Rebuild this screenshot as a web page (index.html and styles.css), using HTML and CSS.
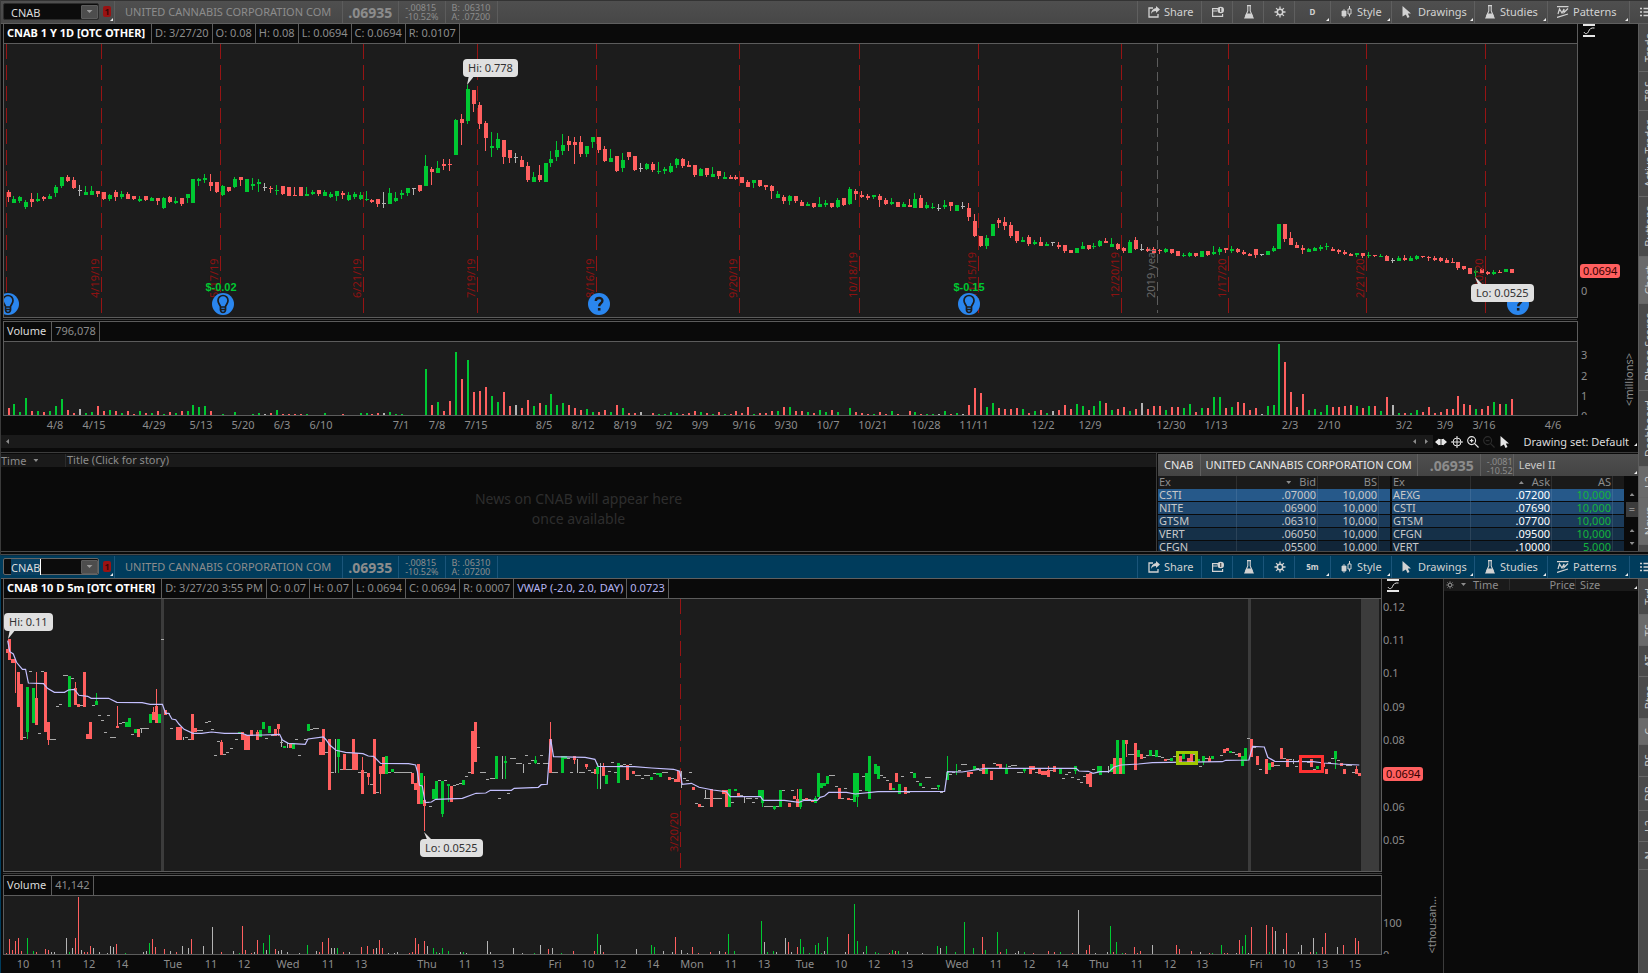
FILE: index.html
```html
<!DOCTYPE html>
<html lang="en">
<head>
<meta charset="utf-8">
<title>CNAB charts</title>
<link rel="stylesheet" href="styles.css">
</head>
<body>
<svg class="defs" aria-hidden="true">
  <symbol id="i-share" viewBox="0 0 12 12"><path d="M5 2H1v9h9V8" fill="none" stroke="currentColor" stroke-width="1.3"/><path d="M8 0l4 3.6L8 7V5C5.5 5 4 6 3 8c0-3.500 2-5.500 5-6z" fill="currentColor"/></symbol>
  <symbol id="i-alert" viewBox="0 0 12 12"><path d="M6 2.600H.6v7.800h10V8M.6 5H5" fill="none" stroke="currentColor" stroke-width="1.200"/><circle cx="8.700" cy="4" r="3.300" fill="currentColor"/><path d="M8.700 2v4" stroke="#4a4a4a" stroke-width="1.200"/></symbol>
  <symbol id="i-flask" viewBox="0 0 12 14"><path d="M4 .6h4M4.800 1v5L2.600 11M7.200 1v5l2.200 5" fill="none" stroke="currentColor" stroke-width="1.100"/><path d="M3.300 8.500h5.400L11 13.400H1z" fill="currentColor"/></symbol>
  <symbol id="i-gear" viewBox="0 0 12 12"><circle cx="6" cy="6" r="2.700" fill="none" stroke="currentColor" stroke-width="1.500"/><path d="M6 .5v2.500M6 9v2.500M.5 6H3M9 6h2.500M2.100 2.100l1.800 1.800M8.100 8.100l1.800 1.800M2.100 9.900l1.800-1.800M8.100 3.900l1.800-1.800" stroke="currentColor" stroke-width="1.300"/></symbol>
  <symbol id="i-style" viewBox="0 0 10 12"><path d="M0 5h4v5H0zM2 3v9" fill="currentColor" stroke="currentColor" stroke-width=".8"/><path d="M6 3h3v5H6zM7.500 0v3M7.500 8v2.500" fill="none" stroke="currentColor"/></symbol>
  <symbol id="i-cursor" viewBox="0 0 9 12"><path d="M0 0l8.500 7.500H5.300L7 11l-2 1-1.600-3.600L0 10.500z" fill="currentColor"/></symbol>
  <symbol id="i-pattern" viewBox="0 0 12 12"><path d="M0 .7h11.500M0 11.500L11 8M1 8l1.500-5L5 7l2-4v3.500L11 2.500" fill="none" stroke="currentColor" stroke-width="1.200"/></symbol>
  <symbol id="i-list" viewBox="0 0 12 10"><path d="M0 1.500h2M0 5h2M0 8.500h2M3.500 1.500H12M3.500 5H12M3.500 8.500H12" stroke="currentColor" stroke-width="1.300"/></symbol>
  <symbol id="i-scale" viewBox="0 0 12 13"><path d="M0 1h12M0 12h12" stroke="currentColor" stroke-width="2"/><path d="M1 8C2 10.500 4.500 10 5.500 7.500s2.500-4 6-3.500" fill="none" stroke="currentColor"/></symbol>
  <symbol id="i-pan" viewBox="0 0 12 10"><path d="M0 5l4-3.500v7zM12 5L8 1.500v7zM4 2h1.600v6H4zM6.400 2H8v6H6.400z" fill="currentColor"/></symbol>
  <symbol id="i-cross" viewBox="0 0 12 12"><circle cx="6" cy="6" r="4" fill="none" stroke="currentColor"/><path d="M6 0v12M0 6h12" stroke="currentColor"/></symbol>
  <symbol id="i-zoomin" viewBox="0 0 13 13"><circle cx="5" cy="5" r="4.300" fill="none" stroke="currentColor" stroke-width="1.200"/><path d="M8 8l4.500 4.500M3 5h4M5 3v4" stroke="currentColor" stroke-width="1.300"/></symbol>
  <symbol id="i-zoomout" viewBox="0 0 13 13"><circle cx="5" cy="5" r="4.300" fill="none" stroke="currentColor" stroke-width="1.200"/><path d="M8 8l4.500 4.500M3 5h4" stroke="currentColor" stroke-width="1.300"/></symbol>
  <symbol id="i-bulb" viewBox="0 0 22 22"><circle cx="11" cy="11" r="11" fill="#2a86ee"/><path d="M8.500 13.500C7.500 11 6 10 6 7.500a5 5 0 0 1 10 0c0 2.500-1.500 3.500-2.500 6V17c0 1-1 2.500-2.500 2.500S8.500 18 8.500 17zM8.500 14h5M8.500 16.500h5" fill="none" stroke="#1c1c1c" stroke-width="1.700"/></symbol>
  <symbol id="i-help" viewBox="0 0 22 22"><circle cx="11" cy="11" r="11" fill="#2a86ee"/><path d="M7.800 8c0-4 6.600-4 6.600-.3 0 2.700-3.200 2.500-3.200 5.600" fill="none" stroke="#1c1c1c" stroke-width="2.400"/><path d="M9.900 15h2.600v2.600H9.900z" fill="#1c1c1c"/></symbol>
</svg>

<main class="window window-daily">
  <header class="toolbar">
    <div class="symbol"><input type="text" value="CNAB" aria-label="Symbol"><button class="drop" aria-label="Recent symbols"></button></div>
    <button class="link-flag tick" aria-label="Link colour"><b>1</b></button>
    <span class="company">UNITED CANNABIS CORPORATION COM</span>
    <span class="last">.06935</span>
    <span class="pair">-.00815<br>-10.52%</span>
    <span class="pair">B: .06310<br>A: .07200</span>
    <nav class="tools">
      <button class="t-share"><svg class="i12"><use href="#i-share"/></svg>Share</button>
      <button class="t-icon" aria-label="Alerts"><svg class="i12"><use href="#i-alert"/></svg></button>
      <button class="t-icon" aria-label="Edit studies"><svg class="flask"><use href="#i-flask"/></svg></button>
      <button class="t-icon" aria-label="Settings"><svg class="i12"><use href="#i-gear"/></svg></button>
      <button class="t-frame tick">D</button>
      <button class="t-style tick"><svg class="i12"><use href="#i-style"/></svg>Style</button>
      <button class="t-draw tick"><svg class="i12"><use href="#i-cursor"/></svg>Drawings</button>
      <button class="t-studies tick"><svg class="flask"><use href="#i-flask"/></svg>Studies</button>
      <button class="t-patterns tick"><svg class="i12"><use href="#i-pattern"/></svg>Patterns</button>
      <button class="t-list" aria-label="Menu"><svg class="i12"><use href="#i-list"/></svg></button>
    </nav>
  </header>
  <div class="window-body">
    <div class="stack">
      <section class="chart">
        <div class="band price-band">
          <div class="frame">
            <div class="info"><strong>CNAB 1 Y 1D [OTC OTHER]</strong><span>D: 3/27/20</span><span>O: 0.08</span><span>H: 0.08</span><span>L: 0.0694</span><span>C: 0.0694</span><span>R: 0.0107</span></div>
            <div class="plot" id="daily-price"></div>
          </div>
          <div class="axis"><div class="axis-head"><svg class="scale"><use href="#i-scale"/></svg></div><div class="axis-body" id="daily-price-axis"></div></div>
        </div>
        <div class="splitter"></div>
        <div class="band volume-band">
          <div class="frame closed">
            <div class="info"><span class="name">Volume</span><span>796,078</span></div>
            <div class="plot" id="daily-volume"></div>
          </div>
          <div class="axis"><div class="axis-head"></div><div class="axis-body clipped" id="daily-volume-axis"></div><span class="unit">&lt;millions&gt;</span></div>
        </div>
        <div class="dates" id="daily-dates"></div>
      </section>
      <div class="scrollrow">
        <div class="track"><i class="arrow left"></i><span class="grow"></span><i class="arrow left"></i><i class="arrow right"></i></div>
        <button aria-label="Pan"><svg class="i12"><use href="#i-pan"/></svg></button>
        <button aria-label="Crosshair"><svg class="i12"><use href="#i-cross"/></svg></button>
        <button aria-label="Zoom in"><svg class="i12"><use href="#i-zoomin"/></svg></button>
        <button class="off" aria-label="Zoom out"><svg class="i12"><use href="#i-zoomout"/></svg></button>
        <button aria-label="Pointer"><svg class="i12"><use href="#i-cursor"/></svg></button>
        <button class="set tick">Drawing set: Default</button>
      </div>
      <div class="lower">
        <section class="news">
          <header><span class="c-time">Time<i class="arrow down"></i></span><span>Title (Click for story)</span></header>
          <p>News on CNAB will appear here<br>once available</p>
        </section>
        <section class="level2">
          <header class="tick"><span class="l-sym">CNAB</span><span class="l-name">UNITED CANNABIS CORPORATION COM</span><span class="last">.06935</span><span class="pair">-.0081<br>-10.52</span><span class="l-title">Level II</span></header>
          <div class="books">
            <table class="bids">
              <thead><tr><th>Ex</th><th><i class="arrow down"></i>Bid</th><th>BS</th><th></th></tr></thead>
              <tbody>
                <tr><td>CSTI</td><td>.07000</td><td>10,000</td><td></td></tr>
                <tr><td>NITE</td><td>.06900</td><td>10,000</td><td></td></tr>
                <tr><td>GTSM</td><td>.06310</td><td>10,000</td><td></td></tr>
                <tr><td>VERT</td><td>.06050</td><td>10,000</td><td></td></tr>
                <tr><td>CFGN</td><td>.05500</td><td>10,000</td><td></td></tr>
              </tbody>
            </table>
            <table class="asks">
              <thead><tr><th>Ex</th><th><i class="arrow up"></i>Ask</th><th>AS</th><th></th></tr></thead>
              <tbody>
                <tr><td>AEXG</td><td>.07200</td><td>10,000</td><td></td></tr>
                <tr><td>CSTI</td><td>.07690</td><td>10,000</td><td></td></tr>
                <tr><td>GTSM</td><td>.07700</td><td>10,000</td><td></td></tr>
                <tr><td>CFGN</td><td>.09500</td><td>10,000</td><td></td></tr>
                <tr><td>VERT</td><td>.10000</td><td>5,000</td><td></td></tr>
              </tbody>
            </table>
            <div class="vscroll"><i class="arrow up"></i><b>=</b><i class="arrow up"></i><i class="arrow down"></i></div>
          </div>
        </section>
      </div>
    </div>
    <aside class="rail"><button><span>Trade</span></button><button><span>T&amp;S</span></button><button><span>Active Trader</span></button><button><span>Buttons</span></button><button class="on"><span>Chart</span></button><button><span>Phase Scores</span></button><button><span>Dashboard</span></button><button class="on"><span>L2</span></button><button class="on"><span>News</span></button></aside>
  </div>
  <div class="window-foot"></div>
</main>

<section class="window window-intraday active">
  <header class="toolbar">
    <div class="symbol"><input type="text" value="CNAB" aria-label="Symbol"><button class="drop" aria-label="Recent symbols"></button></div>
    <button class="link-flag tick" aria-label="Link colour"><b>1</b></button>
    <span class="company">UNITED CANNABIS CORPORATION COM</span>
    <span class="last">.06935</span>
    <span class="pair">-.00815<br>-10.52%</span>
    <span class="pair">B: .06310<br>A: .07200</span>
    <nav class="tools">
      <button class="t-share"><svg class="i12"><use href="#i-share"/></svg>Share</button>
      <button class="t-icon" aria-label="Alerts"><svg class="i12"><use href="#i-alert"/></svg></button>
      <button class="t-icon" aria-label="Edit studies"><svg class="flask"><use href="#i-flask"/></svg></button>
      <button class="t-icon" aria-label="Settings"><svg class="i12"><use href="#i-gear"/></svg></button>
      <button class="t-frame tick">5m</button>
      <button class="t-style tick"><svg class="i12"><use href="#i-style"/></svg>Style</button>
      <button class="t-draw tick"><svg class="i12"><use href="#i-cursor"/></svg>Drawings</button>
      <button class="t-studies tick"><svg class="flask"><use href="#i-flask"/></svg>Studies</button>
      <button class="t-patterns tick"><svg class="i12"><use href="#i-pattern"/></svg>Patterns</button>
      <button class="t-list" aria-label="Menu"><svg class="i12"><use href="#i-list"/></svg></button>
    </nav>
  </header>
  <div class="window-body">
    <section class="chart">
      <div class="band price-band">
        <div class="frame">
          <div class="info"><strong>CNAB 10 D 5m [OTC OTHER]</strong><span>D: 3/27/20 3:55 PM</span><span>O: 0.07</span><span>H: 0.07</span><span>L: 0.0694</span><span>C: 0.0694</span><span>R: 0.0007</span><span class="study">VWAP (-2.0, 2.0, DAY)</span><span class="study">0.0723</span></div>
          <div class="plot" id="intra-price"></div>
        </div>
        <div class="axis"><div class="axis-head"><svg class="scale"><use href="#i-scale"/></svg></div><div class="axis-body" id="intra-price-axis"></div></div>
      </div>
      <div class="splitter"></div>
      <div class="band volume-band">
        <div class="frame closed">
          <div class="info"><span class="name">Volume</span><span>41,142</span></div>
          <div class="plot" id="intra-volume"></div>
        </div>
        <div class="axis"><div class="axis-head"></div><div class="axis-body clipped" id="intra-volume-axis"></div><span class="unit">&lt;thousan...</span></div>
      </div>
      <div class="dates" id="intra-dates"></div>
    </section>
    <section class="sales">
      <header class="tick"><svg class="i8"><use href="#i-gear"/></svg><i class="arrow down"></i><span class="s-time">Time</span><span class="s-price">Price</span><span class="s-size">Size</span></header>
    </section>
    <aside class="rail"><button><span>Trd</span></button><button class="on"><span>TS</span></button><button><span>AT</span></button><button><span>Btns</span></button><button class="on"><span>C</span></button><button><span>PS</span></button><button><span>DB</span></button><button><span>L2</span></button><button><span>N</span></button></aside>
  </div>
</section>
<script src="charts.js"></script>
</body>
</html>
```
FILE: styles.css
```css
* { box-sizing: border-box; }
html, body { height: 100%; }
body {
  margin: 0;
  display: flex;
  flex-direction: column;
  overflow: hidden;
  background: #0a0a0a;
  color: #8c8c8c;
  font: 11px/14px "Noto Sans", "Open Sans", sans-serif;
}
button, input {
  margin: 0;
  padding: 0;
  border: 0;
  border-radius: 0;
  background: none;
  color: inherit;
  font: inherit;
}
.defs { position: absolute; width: 0; height: 0; }
.i12 { width: 12px; height: 12px; flex: none; }
.i8 { width: 8px; height: 8px; flex: none; }
.flask { width: 12px; height: 14px; flex: none; }

.window { display: flex; flex-direction: column; min-height: 0; }
.window-daily { flex: 555 1 0; border-left: 1px solid #3a3a3a; }
.window-intraday { flex: 418 1 0; border-left: 1px solid #003c5c; }
.window-body { flex: 1; display: flex; min-height: 0; }
.window-foot { height: 4px; flex: none; border-top: 1px solid #4a4a4a; border-bottom: 1px solid #4a4a4a; }
.stack { flex: 1; min-width: 0; display: flex; flex-direction: column; }

/* toolbar */
.toolbar {
  height: 24px;
  flex: none;
  display: flex;
  align-items: stretch;
  padding-left: 2px;
  border-top: 1px solid #333;
  border-bottom: 1px solid #5f5f5f;
  background: linear-gradient(#4f4f4f, #474747);
}
.active .toolbar { border-top-color: #06304a; background: #003c5c; }
.symbol {
  width: 96px;
  margin: 2px 0 3px;
  display: flex;
  align-items: center;
  border: 1px solid #2c2c2c;
  border-radius: 2px;
  background: #0c0c0c;
}
.symbol input { flex: 1; min-width: 0; height: 16px; padding: 2px 0 0 7px; color: #dcdcdc; }
.active .symbol { border-color: #666; }
.active .symbol input {
  background:
    linear-gradient(#fff, #fff) 36px 0 / 1px 16px no-repeat,
    linear-gradient(#0a3f60, #0a3f60) 7px 0 / 29px 16px no-repeat;
}
.drop { width: 17px; height: 14px; background: #4d4d4d; border: 1px solid #5c5c5c; border-radius: 1px; display: grid; place-items: center; }
.drop::after { content: ""; width: 6px; height: 3px; background: #999; clip-path: polygon(0 0, 100% 0, 50% 100%); }
.link-flag { width: 15px; padding: 5px 0 0 4px; display: flex; align-items: flex-start; }
.link-flag b { width: 8px; height: 11px; border-radius: 2px; background: #9a1212; color: #3c0808; font-size: 9px; line-height: 11px; text-align: center; }
.tick { position: relative; }
.tick::after { content: ""; position: absolute; right: 1px; bottom: 2px; width: 3px; height: 3px; background: #eee; clip-path: polygon(100% 0, 100% 100%, 0 100%); }
.company { padding: 4px 11px 0 10px; border-left: 1px solid #5c5c5c; white-space: nowrap; }
.last { padding: 3px 6px 0 5px; border-left: 1px solid #5c5c5c; font-size: 14px; line-height: 17px; font-weight: bold; }
.pair { padding: 2px 6px 0; border-left: 1px solid #5c5c5c; font-size: 9px; line-height: 9px; white-space: nowrap; }
.tools { flex: 1; display: flex; justify-content: flex-end; margin-left: 1px; border-left: 1px solid #5c5c5c; color: #d2d2d2; }
.tools button { border-left: 1px solid #5f5f5f; display: flex; align-items: center; flex: none; text-align: left; }
.active .tools, .active .tools button, .active .company, .active .last, .active .pair { border-color: #1a557a; }
.t-share { width: 64px; padding-left: 10px; gap: 4px; }
.t-icon { width: 31px; padding-left: 10px; }
.tools .t-frame { width: 36px; justify-content: center; font-size: 8px; font-weight: bold; }
.t-style { width: 61px; padding-left: 10px; gap: 4px; }
.t-draw { width: 83px; padding-left: 9px; gap: 5px; }
.t-studies { width: 73px; padding-left: 9px; gap: 4px; }
.t-patterns { width: 82px; padding-left: 9px; gap: 4px; }
.t-list { width: 19px; padding-left: 10px; overflow: hidden; }

/* charts */
.chart { flex: 1; min-width: 0; min-height: 0; display: flex; flex-direction: column; padding-left: 2px; }
.band { display: flex; min-height: 0; }
.window-daily .price-band { flex: 294 1 0; }
.window-daily .volume-band { flex: 95 1 0; }
.window-intraday .price-band { flex: 293 1 0; }
.window-intraday .volume-band { flex: 80 1 0; }
.frame { flex: 1; min-width: 0; display: flex; flex-direction: column; border: 1px solid #5c5c5c; border-top: 0; }
.frame.closed { border-top: 1px solid #5c5c5c; }
.info { height: 20px; flex: none; display: flex; border-bottom: 1px solid #5c5c5c; white-space: nowrap; overflow: hidden; }
.info > * { padding: 2px 3px 0; border-right: 1px solid #5c5c5c; }
.info strong { padding-right: 6px; color: #fff; }
.info .name { padding-right: 5px; color: #dcdcdc; }
.info .study { color: #b4b4f0; }
.plot { flex: 1; position: relative; min-height: 0; overflow: hidden; background: #1c1c1c; }
.plot svg.marks { position: absolute; width: 100%; height: 100%; }
.splitter { height: 3px; flex: none; margin: 0 61px 0 0; background: linear-gradient(#0a0a0a 33%, #3c3c3c 33% 66%, #0a0a0a 66%); }
.axis { width: 60px; flex: none; position: relative; display: flex; flex-direction: column; }
.window-intraday .axis { width: 61px; }
.axis-head { height: 20px; flex: none; padding-left: 5px; color: #e6e6e6; }
.closed + .axis .axis-head { height: 21px; }
.scale { width: 12px; height: 13px; display: block; }
.axis-body { flex: 1; position: relative; margin-bottom: 1px; }
.clipped { overflow: hidden; }
.axis-body span { position: absolute; left: 3px; transform: translateY(-50%); }
.window-intraday .axis-body span { left: 1px; }
.axis-body .now { left: 2px; height: 14px; padding: 0 3px; border-radius: 3px; background: #ff5f5f; color: #300; }
.unit { position: absolute; right: 2px; bottom: 10px; writing-mode: vertical-rl; transform: rotate(180deg); }
.window-intraday .unit { right: 4px; bottom: 1px; }
.dates { height: 19px; flex: none; position: relative; margin: 0 61px 0 1px; }
.window-intraday .dates { height: 18px; margin-right: 62px; }
.dates span { position: absolute; top: 2px; transform: translateX(-50%); }
.expiry { position: absolute; writing-mode: vertical-rl; transform: translate(-12px, -100%) rotate(180deg); line-height: 12px; color: #8c1212; white-space: nowrap; }
.expiry.year { color: #666; }
.badge { position: absolute; width: 22px; height: 22px; transform: translate(-50%, -50%); }
.dividend { position: absolute; transform: translate(-50%, -50%); color: #00c832; font: bold 11px/12px "Liberation Sans", sans-serif; }
.tip { position: absolute; height: 18px; padding: 2px 5px 0; border-radius: 4px; background: #e0e0e0; color: #333; white-space: nowrap; }
.tip::after { content: ""; position: absolute; left: 4px; width: 8px; height: 8px; background: #e0e0e0; }
.tip.hi::after { top: 18px; clip-path: polygon(20% 0, 80% 0, 0 100%); }
.tip.lo::after { top: -7px; clip-path: polygon(0 0, 100% 100%, 40% 100%); }

/* scroll strip under the daily chart */
.scrollrow { height: 13px; flex: none; display: flex; align-items: center; color: #e6e6e6; }
.scrollrow .track { flex: 1; align-self: stretch; display: flex; align-items: center; gap: 9px; padding: 0 5px; background: #1a1a1a; }
.grow { flex: 1; }
.scrollrow button { width: 16px; height: 13px; display: flex; justify-content: center; align-items: center; }
.scrollrow .off { color: #2c2c2c; }
.scrollrow .set { width: 125px; padding-right: 9px; justify-content: flex-end; white-space: nowrap; color: #dcdcdc; }
.arrow { display: inline-block; flex: none; background: #8c8c8c; }
.arrow.left { width: 3px; height: 5px; clip-path: polygon(0 50%, 100% 0, 100% 100%); }
.arrow.right { width: 3px; height: 5px; clip-path: polygon(0 0, 100% 50%, 0 100%); }
.arrow.down { width: 5px; height: 3px; clip-path: polygon(0 0, 100% 0, 50% 100%); }
.arrow.up { width: 5px; height: 3px; clip-path: polygon(50% 0, 100% 100%, 0 100%); }

/* news and level II */
.lower { height: 103px; flex: none; display: flex; padding-top: 5px; background: linear-gradient(#3c3c3c, #3c3c3c) 0 4px / 100% 1px no-repeat; }
.news { flex: 1; min-width: 0; padding-top: 1px; border-right: 1px solid #3c3c3c; display: flex; flex-direction: column; }
.news header { height: 13px; flex: none; display: flex; line-height: 12px; background: #1a1a1a; }
.c-time { width: 65px; border-right: 1px solid #2c2c2c; display: flex; align-items: center; gap: 7px; }
.news header span + span { padding-left: 1px; }
.news p { margin: 22px 0 0; color: #2e2e2e; font-size: 14px; line-height: 20px; text-align: center; }
.level2 { width: 481px; flex: none; padding: 1px 0 0 1px; overflow: hidden; display: flex; flex-direction: column; }
.level2 header { height: 22px; flex: none; display: flex; background: linear-gradient(#4f4f4f, #444); color: #e6e6e6; }
.level2 header span { border-color: #5f5f5f; }
.l-sym { padding: 4px 6px 0; border-right: 1px solid; }
.l-name { padding: 4px 5px 0; white-space: nowrap; }
.level2 .last { width: 63px; padding-left: 12px; color: #8c8c8c; }
.level2 .pair { width: 33px; padding-top: 3px; overflow: hidden; color: #8c8c8c; }
.l-title { padding: 4px 5px 0; border-left: 1px solid; color: #c8c8c8; }
.books { flex: 1; min-height: 0; display: flex; gap: 2px; overflow: hidden; }
.books table { width: 232px; flex: none; table-layout: fixed; border-collapse: separate; border-spacing: 0; align-self: flex-start; }
.books th, .books td { height: 13px; padding: 0 1px; border-right: 1px solid #ffffff18; font-weight: normal; line-height: 12px; text-align: right; vertical-align: top; }
.books th { background: #1a1a1a; color: #8c8c8c; }
.books th .arrow { margin-right: 8px; vertical-align: 2px; }
.books td { color: #c8c8c8; border-bottom: 1px solid #0a0a0a; }
.books tr > :first-child { width: 79px; text-align: left; }
.books tr > :nth-child(2) { width: 81px; }
.books tr > :nth-child(3) { width: 61px; }
.books tr > :last-child { border-right: 0; padding: 0; }
.asks td:nth-child(2) { color: #fff; }
.asks td:nth-child(3) { color: #14b43c; }
.books tbody tr:nth-child(1) { background: #26598a; }
.books tbody tr:nth-child(2) { background: #20486f; }
.books tbody tr:nth-child(3) { background: #1b3b5a; }
.books tbody tr:nth-child(4) { background: #153048; }
.books tbody tr:nth-child(5) { background: #112538; }
.vscroll { flex: 1; display: flex; flex-direction: column; align-items: center; padding-top: 17px; gap: 6px; }
.vscroll b { width: 100%; height: 15px; background: #3c3c3c; line-height: 14px; text-align: center; font-weight: normal; }
.vscroll b + .arrow { margin: 6px 0 4px; }

/* time and sales */
.sales { width: 195px; flex: none; border-left: 1px solid #3c3c3c; }
.sales header { height: 12px; display: flex; align-items: center; padding: 0 0 1px 2px; gap: 7px; line-height: 11px; background: #1a1a1a; }
.s-time { width: 37px; border-right: 1px solid #2c2c2c; }
.s-price { width: 59px; border-right: 1px solid #2c2c2c; text-align: right; }
.sales .s-size { margin-left: -3px; }

/* side rail */
.rail { width: 10px; flex: none; overflow: hidden; background: #4a4a4a; border-left: 1px solid #5c5c5c; color: #c8c8c8; }
.rail button { display: block; width: 24px; padding: 9px 0 9px 3px; border-bottom: 1px solid #666; }
.rail .on { background: #6a6a6a; }
.rail span { display: block; width: 14px; writing-mode: vertical-rl; transform: rotate(180deg); white-space: nowrap; }
```
FILE: charts.js
```js
const COLORS = { R: '#ff5f5f', G: '#00c832', W: '#b4b4b4' };

/* Daily bars, oldest first: colour, high, body top, body bottom, low, volume.
   Three units to one drawing unit. */
const DAILY = `
R571,575,592,606,22 G588,598,610,610,34 G589,592,604,609,10 G600,606,620,626,52 R579,597,607,620,12 G580,596,604,607,12 R589,592,597,603,9 G583,589,598,598,12 G555,561,580,592,28 G530,530,558,564,49
R526,532,544,547,15 R532,540,564,567,7 W555,571,573,588,19 G558,575,585,585,7 G559,573,585,585,10 R573,573,582,592,27 R575,577,598,600,12 G583,585,598,602,15 R571,577,591,604,12 G573,583,592,596,7
R575,582,597,597,12 R588,588,598,600,4 G588,597,603,606,12 R588,588,600,603,7 G592,595,603,603,7 R594,594,603,615,12 G592,595,624,626,4 R588,592,606,609,9 G592,603,610,612,7 R594,594,612,618,12
G583,583,594,609,12 G537,537,609,609,31 G534,537,543,558,25 G522,534,540,549,28 R522,546,557,574,12 R546,546,575,578,0 G555,558,585,587,4 R561,561,574,575,0 G531,537,561,565,10 R531,531,540,558,0
G537,537,575,577,0 G534,552,558,571,4 G538,546,552,575,7 W550,561,564,574,4 R557,564,567,578,7 G555,570,573,585,15 R558,558,583,586,4 R561,561,588,588,4 R561,585,588,588,4 R561,561,588,588,4
G561,583,588,588,4 G570,576,582,585,0 R570,570,583,588,0 G570,575,588,588,7 G575,583,592,595,0 G573,573,588,602,0 R573,580,585,598,4 G575,585,600,602,0 G575,582,592,596,0 G577,585,598,600,7
G573,597,600,602,7 R597,600,606,609,4 R597,597,612,620,7 W576,608,611,624,7 G565,579,612,612,10 G575,594,604,607,4 G570,579,585,597,4 G564,564,578,588,0 W564,564,568,586,0 R555,555,573,575,0
G465,498,558,558,138 R500,507,516,555,31 G484,504,518,518,40 R477,491,498,510,12 R477,492,495,514,43 G357,360,465,465,190 R342,357,369,435,108 G255,267,363,372,166 R270,270,312,335,70 R306,315,372,386,73
R364,369,414,452,85 G396,438,444,470,58 G400,417,444,450,40 R420,420,472,491,70 R450,450,475,488,28 W459,471,474,490,31 R468,479,500,500,22 R487,498,540,545,46 G515,531,545,545,28 R495,525,540,545,37
G489,489,545,545,31 G453,477,490,500,64 G422,450,471,482,31 G402,435,453,464,37 R408,423,435,453,31 R412,426,435,491,22 R408,426,462,470,16 G438,438,462,470,19 G411,411,426,443,10 R411,411,450,459,10
R438,447,483,485,16 G447,474,486,486,10 R468,468,513,516,31 G459,480,504,515,22 R456,456,471,480,7 R468,468,510,512,7 W490,504,507,515,10 G489,492,507,511,0 R487,492,510,515,7 G486,513,515,522,4
G501,507,513,521,4 G490,498,516,518,10 G474,477,495,504,7 R474,477,498,503,4 R484,495,501,501,7 R495,495,525,530,12 G504,507,528,528,10 R504,504,525,532,7 G501,522,531,532,4 R513,513,528,538,10
G516,531,537,537,4 R526,531,537,538,4 R524,531,537,539,12 R531,531,549,549,7 R540,546,561,561,25 G540,540,549,564,4 R540,540,558,562,7 R555,555,561,571,7 R555,558,573,597,12 G573,582,594,595,13
R585,591,603,612,25 G585,588,603,614,25 R588,588,603,608,13 R600,606,618,618,13 G606,612,618,619,10 R609,609,621,624,7 G591,612,621,622,16 G600,608,615,621,10 R609,609,621,623,16 G594,600,621,623,10
R594,594,615,618,0 G561,567,612,616,22 R567,573,582,600,10 R573,585,591,594,7 R583,588,594,600,4 G585,585,591,597,4 R582,588,600,620,10 R594,600,612,614,4 G595,606,612,615,13 R606,606,621,621,4
G606,612,621,622,0 R597,615,621,622,13 G579,597,624,624,10 R585,594,624,624,4 G606,615,624,627,4 G608,621,623,627,4 W611,623,626,633,4 G600,615,621,628,13 R606,606,618,632,4 G615,615,633,633,7
W606,617,620,628,4 R609,624,651,662,31 R641,663,708,710,82 R708,708,738,740,67 G705,714,738,746,25 G672,672,708,708,37 R655,660,669,684,22 R651,666,678,690,19 R666,675,708,713,19 R693,693,723,728,22
G710,720,726,727,19 R705,711,732,738,7 G720,726,732,736,13 R711,726,738,738,16 G726,732,738,738,7 W726,727,730,738,13 R726,735,741,746,16 R735,735,753,758,31 R750,750,759,760,19 G744,744,759,759,34
G726,738,747,747,28 R735,735,747,749,16 G729,737,739,748,28 G720,723,738,740,43 R714,723,729,729,37 G714,732,741,741,16 R729,732,747,751,19 R740,744,753,758,25 G720,726,758,758,13 R711,720,747,750,19
W733,746,748,754,37 R742,747,753,755,19 R740,747,758,760,28 R747,750,753,762,28 G744,747,755,758,16 R747,747,758,762,25 R753,753,768,769,25 G759,765,768,770,22 G756,759,768,772,34 R759,759,768,770,10
G753,753,770,771,22 R753,753,765,769,22 G738,756,762,766,55 G740,747,756,764,55 R744,744,750,758,22 G738,747,753,758,25 R744,747,756,758,40 R750,756,762,766,37 R760,762,768,769,16 R747,747,765,773,22
W762,763,765,769,4 G753,753,765,766,28 G738,744,753,756,31 G672,672,747,747,214 R672,672,717,727,160 R696,714,735,735,70 R727,735,744,745,25 R735,744,750,762,64 G744,747,756,756,16 G740,744,752,754,19
G735,741,747,753,10 G729,738,741,750,31 R740,747,753,754,25 R747,750,756,762,25 R749,756,762,766,28 R760,762,768,769,31 G758,759,766,772,28 R759,759,768,775,22 G756,765,768,775,28 R765,765,769,772,28
G762,767,769,772,13 R765,768,783,783,55 W773,781,783,790,31 G768,774,783,784,7 R766,774,781,783,7 G768,774,783,784,7 G766,768,777,779,16 R768,768,771,774,10 R769,771,775,783,25 R768,774,779,783,7
R771,774,783,786,10 R774,780,789,789,19 R775,786,789,790,19 R786,786,804,810,58 R797,798,807,811,34 R804,804,823,823,31 G802,814,818,835,19 R805,807,819,819,19 R812,816,822,825,28 G810,816,822,824,40
R810,816,818,819,34 G807,807,816,817,34 R807,807,819,819,49`.trim().split(/\s+/);

/* Intraday marks in three stretches. Capital: body; small letter: wick;
   d: flat bar. Values: x, top, bottom. */
const INTRA = [
  { x0: 0, unit: 2.851, marks: `
R22,178,188 R27,148,209 R35,207,218 R42,207,218 r44,207,308 R53,247,350 R61,282,449 d69,445 g78,291,446 G78,291,425 d87,247 G96,294,399 r104,247,324 R104,324,405 d112,433 d122,247 R130,247,425 R138,396,450 r138,396,465 d147,449 d155,449 d164,352 d172,346 d183,259 d191,259 G198,259,350 d206,268 r215,276,346 R215,295,345 R224,343,350 d232,349 R241,247,350 R250,433,447 R258,396,447 d267,349 g275,309,345 G275,333,345 d284,379 d292,394 d301,430 d309,379 d318,445 d326,445 r335,348,412 R335,408,413 d344,403 d352,399 G361,396,411 G369,385,411 d378,436 G386,417,430 R395,417,441 w404,418,428 d404,418 d412,418 d420,418 G429,373,399 R438,366,390 r438,352,390 r446,297,399 R446,348,399 G455,373,399 d463,149 R472,361,374 d481,373 d489,418 R506,411,449 R514,411,449 w523,440,449 d532,443 d540,449 R549,373,449 R557,415,426 d566,424 d574,424 d589,399 d597,397 d606,421 d614,499 d623,457 r632,449,494 R632,457,494 d640,494 d649,488 d660,478 d674,451 G684,426,430 R692,427,450 R700,436,480 R708,436,480 R717,420,438 r734,420,450 R734,426,450 G743,420,440 G751,396,418 d760,448 G769,408,430 d777,439 R786,417,438 r794,402,438 R794,402,417 w803,448,472 d803,460 G811,467,474 w820,460,474 R828,460,474 G837,460,477 d846,451 d854,499 d870,451 G880,402,423 d889,421 d897,418 d905,418 R914,456,495 R922,417,495 d931,490 R940,447,600 d948,550 w957,447,550 G965,447,500 g965,447,550 d974,539 R982,491,539 d991,539 d1000,539 R1008,447,539 R1016,490,540 d1025,550 R1034,540,611 r1034,500,611 d1042,550 R1050,549,561 r1050,549,586 d1060,586 R1068,447,611 d1076,610 R1085,529,552 r1085,529,611 R1094,500,552 G1102,498,552 d1111,550 G1119,537,546 d1128,550 d1137,550 d1146,550 d1154,550 d1162,550 d1170,550 R1177,549,582 R1185,579,600 R1193,522,642 G1202,549,642 R1210,630,648 r1210,558,723 d1219,640 d1228,650 G1236,597,627 G1245,573,627 d1253,574 G1262,573,672 g1262,573,680 d1270,574 G1279,583,588 g1279,583,635 R1287,588,636 d1296,589 d1304,584 d1313,583 G1321,570,585 d1330,561 d1338,550 R1347,423,552 R1355,396,517 d1363,475 d1372,550 d1381,550 d1391,571 d1400,568 d1408,566 G1415,498,567 d1424,628 w1433,498,567 g1442,498,567 G1442,514,518 d1449,613 d1458,508 d1466,508 d1475,523 w1492,523,550 d1484,523 d1500,499 d1509,523 d1518,514 G1527,510,519 g1527,498,523 d1535,523 d1543,499 d1552,523 d1560,523 R1570,447,502`,
    vwap: '22,152 28,185 38,192 47,217 64,238 73,238 81,279 124,281 135,295 155,307 184,307 195,300 212,298 225,316 250,319 260,325 310,325 333,337 405,338 428,343 463,343 472,370 481,370 490,387 501,389 510,402 525,418 550,430 575,430 603,426 640,430 690,430 705,436 750,435 797,433 805,450 822,460 870,463 878,447 922,441 930,450 940,465 958,481 985,487 1035,491 1050,498 1065,499 1085,520 1165,521 1185,525 1190,545 1196,586 1204,588 1212,638 1230,636 1242,628 1318,625 1357,610 1385,609 1398,601 1458,601 1466,595 1535,592 1543,584 1560,583 1568,470',
    volume: `R18,4 R27,45 R35,12 R44,40 R52,48 R61,9 G78,48 G96,9 R104,6 R130,15 R138,12 W147,6 W155,6 W189,48 G198,6 W206,18 R215,48 R223,171 W232,12 R240,6 R249,6 R258,24 W266,18 W283,6 W306,3 W315,24 W323,22 R332,30 G357,4 W409,6 W417,9 G426,33 R434,45 R443,21 R469,15 W486,9 R503,6 W520,24 W537,18 R546,45 W580,24 W605,81 R631,6 W665,9 G683,4 R691,84 R700,12 R717,4 W725,6 R734,42 G751,33 W760,12 G768,57 R785,16 W794,9 W802,12 W819,6 W853,4 G876,27 W902,9 R911,6 R919,36 R936,48 W945,18 W953,18 G962,18 R979,6 W996,6 R1030,21 R1047,24 R1064,15 W1073,18 R1081,42 R1090,18 W1107,4 W1124,4 W1133,6 R1167,4 R1175,6 R1184,48 R1193,30 R1210,40 W1218,24 G1235,18 G1244,6 W1253,4 G1261,18 G1278,9 W1312,6 G1321,6 W1330,4 W1389,40 W1398,6 W1464,18 W1489,4 G1523,4 W1540,27 R1565,15` },
  { x0: 550, unit: 2.851, marks: `
r1,396,550 R0,447,550 d10,550 d18,550 G36,498,549 G44,498,508 d53,508 d62,548 R70,498,511 r70,498,522 w78,508,550 d87,550 d96,550 R104,522,532 r104,522,538 d112,544 d121,550 R129,537,552 G136,531,552 g136,520,597 w144,520,597 R152,529,557 r152,520,557 G161,555,582 d170,547 d178,520 d187,550 G195,519,579 d204,527 R221,525,570 d213,526 d229,526 R238,543,552 d247,559 d255,559 d264,568 d272,559 d281,559 G289,561,570 d298,552 G306,549,555 G314,549,561 d323,550 d331,550 R340,561,570 d349,568 R358,567,576 R366,543,576 w375,544,595 d384,568 d392,574 d400,550 R409,591,600 d418,643 R426,643,651 d435,650 w443,600,627 d443,626 d452,626 R460,597,651 d469,626 d478,626 d486,626 R494,600,612 R503,600,651 G511,597,651 d520,640 G529,597,603 R537,609,619 d546,619 w554,619,640 d563,626 d571,628 d580,640 d588,628 G597,600,620 G605,600,640 g605,600,650 d614,650 d622,650 d631,650 g640,648,660 G640,648,656 d648,650 G657,600,651 d666,602 R683,640,651 d691,602 R697,617,627 R706,628,651 r706,597,651 G714,597,651 g714,597,657 d723,630 R732,624,630 d740,630 R749,630,637 g757,618,640 G757,624,638 G765,549,621 G774,579,595 G782,579,588 G791,559,582 d800,559 d808,559 d817,592 R826,594,627 d834,626 d843,598 R851,625,630 d860,630 G868,549,636 G876,549,620 g876,549,651 d885,604 d894,562 G903,549,603 G911,498,627 G928,522,552 G936,529,567 d945,559 d954,565 d962,574 R971,579,600 G980,594,600 R988,549,576 G996,582,612 d1005,562 R1013,591,612 d1022,610 d1030,550 G1039,549,564 d1048,577 G1056,579,588 d1064,595 d1073,565 d1082,565 d1090,598 d1099,598 G1107,585,591 g1107,585,600 d1116,610 g1133,498,570 G1133,545,570 d1142,555 d1150,550 g1159,522,556 d1167,543 d1175,526 d1184,526 R1193,546,561 R1201,546,552 G1210,528,540 d1218,538 d1227,544 R1235,522,552 G1244,537,552 R1258,543,570 d1267,523 R1275,522,527 R1284,522,534 G1301,534,552 g1301,522,552 d1310,532 d1318,529 d1327,529 d1335,550 d1343,550 G1352,537,543 g1352,537,550 R1370,528,552 R1378,528,540 d1387,550 R1395,534,552 R1404,543,556 R1412,543,556 R1421,540,560 r1421,528,560 d1430,544 R1438,528,546 d1447,538 G1455,534,552 d1464,568 d1472,556 d1481,550 d1490,565 G1498,528,543 g1498,528,552 d1507,570 d1516,580 d1524,562 R1533,552,582 R1541,549,591 d1550,541 G1563,528,545`,
    vwap: '2,447 10,500 100,502 128,508 137,529 240,530 290,534 352,538 370,544 377,583 403,580 425,592 465,600 503,605 514,620 600,620 608,631 668,631 710,637 725,631 762,631 770,622 783,618 795,607 845,607 870,612 935,605 1125,604 1133,545 1175,546 1240,535 1500,535 1508,543 1535,544 1548,550 1568,545',
    volume: `W7,18 G32,4 R67,9 R126,9 G135,60 W143,27 R152,6 W246,15 G289,27 G297,21 W323,9 W349,6 R357,51 W374,12 W391,4 R406,21 R423,4 R457,6 W483,9 R500,6 G508,60 G526,9 G603,99 W611,36 G620,6 G637,9 W645,6 W671,48 R680,36 W688,6 R705,21 G714,45 G722,21 G739,4 G756,27 G765,33 G774,4 W782,9 G791,51 W842,6 R851,60 G868,150 G876,40 W893,6 G902,24 G928,6 G936,4 R967,4 G976,12 R984,9 G993,9 W1019,6 W1061,4 G1104,24 W1113,18 G1130,24 G1156,6 G1181,96 G1207,18 R1233,51 G1241,12 G1275,66 R1284,6 G1301,15 W1327,4 W1335,9 G1352,6 R1378,4 R1421,9 R1438,6 G1455,6 R1489,4 W1506,132 R1529,12 R1538,27 W1555,4` },
  { x0: 1100, unit: 2.861, marks: `
G1,528,555 d10,547 w24,528,550 G33,522,545 R42,504,552 G50,450,552 R59,504,552 G67,450,552 R75,450,462 r75,450,500 d84,496 d93,496 R101,459,540 G110,480,500 R118,492,507 d127,505 d136,497 G144,480,498 d153,499 G161,480,500 d170,500 d179,505 R187,507,514 d196,510 G204,504,512 d213,500 R230,498,516 G238,490,508 R253,504,516 R262,490,516 d270,495 G282,508,514 d288,530 G296,498,516 g296,498,524 d305,508 R313,504,515 r313,497,515 G322,498,508 d348,499 R357,477,490 R365,474,482 G373,484,489 d382,490 d390,494 R399,489,501 G407,499,528 G416,474,512 d426,448 R433,447,501 d441,475 R450,498,525 d459,539 R476,507,552 G485,519,540 R494,516,532 d502,529 d511,529 R519,474,508 d528,508 R536,507,531 d545,510 w553,507,522 d562,532 d571,514 d578,502 d588,502 d596,520 R605,507,531 d614,540 G622,528,538 R640,520,530 R648,537,552 d656,520 d665,508 G674,483,507 g674,483,537 d682,512 R691,519,528 R699,537,552 d708,528 d717,528 d725,550 R734,537,552 r734,528,552 R742,549,558`,
    vwap: '0,545 25,545 40,531 60,525 110,522 150,518 350,515 360,511 426,510 437,469 470,471 480,502 500,514 610,515 640,519 680,522 742,525',
    volume: `W22,6 G30,84 R38,6 G47,36 G64,4 R73,4 R98,21 R107,4 R115,9 W150,27 R218,27 R227,15 R261,9 W287,6 R313,4 G321,4 G347,27 R356,4 R364,4 W390,4 R399,42 G407,24 G416,57 W424,4 R433,81 R476,87 G485,6 R493,81 W502,69 W525,15 R533,63 W568,6 W576,27 R602,6 W610,48 G619,6 R636,21 R645,63 W679,21 R696,27 R731,48 R739,40` }
];

/* Drawing space of every panel: x, y, width, height. */
const SPACE = {
  'daily-price': [4, 44, 1573, 273],
  'daily-volume': [4, 342, 1573, 73],
  'intra-price': [4, 599, 1377, 272],
  'intra-volume': [4, 896, 1377, 58]
};

const el = id => document.getElementById(id);
const rect = (x, y, w, h, fill) => `<rect x="${x}" y="${y}" width="${w}" height="${h}" fill="${fill}"/>`;
const third = v => Math.round(v / 3);

function place(id, x, y) {
  const [x0, y0, w, h] = SPACE[id];
  return `left:${((x - x0) / w * 100).toFixed(3)}%;top:${((y - y0) / h * 100).toFixed(3)}%`;
}
function draw(id, shapes, labels = '') {
  el(id).innerHTML = `<svg class="marks" viewBox="${SPACE[id].join(' ')}" preserveAspectRatio="none" shape-rendering="crispEdges">${shapes}</svg>${labels}`;
}
function dates(id, panel, text) {
  const [x0, , w] = SPACE[panel];
  el(id).innerHTML = text.split(' ').map(t => {
    const [name, x] = t.split('@');
    return `<span style="left:${((x - x0) / w * 100).toFixed(3)}%">${name}</span>`;
  }).join('');
}
function axis(id, panel, ticks) {
  const [, y0, , h] = SPACE[panel];
  el(id).innerHTML = ticks.map(([name, y, now]) =>
    `<span${now ? ' class="now"' : ''} style="top:${((y - y0) / h * 100).toFixed(3)}%">${name}</span>`).join('');
}
const expiryLine = (x, y1, y2, color, dash) =>
  `<line x1="${x + .5}" x2="${x + .5}" y1="${y1}" y2="${y2}" stroke="${color}" stroke-dasharray="${dash}"/>`;

/* daily panels */
{
  const P = 'daily-price';
  let bars = '', volume = '';
  DAILY.forEach((record, i) => {
    const color = COLORS[record[0]];
    const [high, top, bottom, low, vol] = record.slice(1).split(',').map(Number);
    const x = Math.round(6.5 + 5.967 * i);
    const t = third(top), b = Math.max(third(bottom), t + 1);
    bars += rect(x + 1, third(high), 1, Math.max(third(low) - third(high), 1), color) + rect(x, t, 4, b - t, color);
    if (vol) volume += rect(x + 1, 415 - third(vol), 2, third(vol), color);
  });
  const expiries = [['', 6], ['4/19/19', 101], ['5/17/19', 220], ['6/21/19', 363], ['7/19/19', 477], ['8/16/19', 596], ['9/20/19', 739], ['10/18/19', 859], ['11/15/19', 978], ['12/20/19', 1121], ['1/17/20', 1228], ['2/21/20', 1366], ['3/20/20', 1485]];
  let lines = '', labels = '';
  expiries.forEach(([name, x]) => {
    lines += expiryLine(x, 44, 313, '#961414', '15 6.17');
    labels += `<span class="expiry" style="${place(P, x, 298)}">${name}</span>`;
  });
  lines += expiryLine(1157, 44, 313, '#5c5c5c', '9 5');
  labels += `<span class="expiry year" style="${place(P, 1157, 298)}">2019 year</span>`;
  [['bulb', 8], ['bulb', 223], ['help', 599], ['bulb', 969], ['help', 1518]].forEach(([icon, x]) => {
    labels += `<svg class="badge" style="${place(P, x, 304)}"><use href="#i-${icon}"/></svg>`;
  });
  labels += `<span class="dividend" style="${place(P, 221, 287)}">$-0.02</span><span class="dividend" style="${place(P, 969, 287)}">$-0.15</span>`;
  labels += `<span class="tip hi" style="${place(P, 463, 59)}">Hi: 0.778</span><span class="tip lo" style="${place(P, 1471, 284)}">Lo: 0.0525</span>`;
  draw(P, lines + bars, labels);
  draw('daily-volume', volume);
  axis('daily-price-axis', P, [['0.0694', 271, true], ['0', 291]]);
  axis('daily-volume-axis', 'daily-volume', [['3', 355], ['2', 376], ['1', 396], ['0', 416]]);
  dates('daily-dates', P, '4/8@55 4/15@94 4/29@154 5/13@201 5/20@243 6/3@282 6/10@321 7/1@401 7/8@437 7/15@476 8/5@544 8/12@583 8/19@625 9/2@664 9/9@700 9/16@744 9/30@786 10/7@828 10/21@873 10/28@926 11/11@974 12/2@1043 12/9@1090 12/30@1171 1/13@1216 2/3@1290 2/10@1329 3/2@1404 3/9@1445 3/16@1484 4/6@1553');
}

/* intraday panels */
{
  const P = 'intra-price';
  let marks = rect(161, 599, 3, 272, '#3c3c3c') + rect(1248, 599, 3, 272, '#3c3c3c') + rect(1361, 599, 18, 272, '#3c3c3c');
  marks += expiryLine(680, 599, 868, '#961414', '15 6.17');
  let volume = '';
  const path = [];
  INTRA.forEach(({ x0, unit, marks: list, vwap, volume: vols }) => {
    const X = v => x0 + v / unit;
    list.trim().split(/\s+/).forEach(token => {
      const kind = token[0];
      const [x, top, bottom] = token.slice(1).split(',').map(Number);
      const px = Math.round(X(x) - .5), y = 590 + third(top);
      if (kind === 'd') { marks += rect(px - 1, y - 1, 3, 1, '#aaa'); return; }
      const color = COLORS[kind.toUpperCase()];
      const h = Math.max(590 + third(bottom) - y, 1);
      marks += kind === kind.toLowerCase() ? rect(px, y, 1, h, color) : rect(px - 1, y, 3, h, color);
    });
    vwap.split(' ').forEach(p => {
      const [x, y] = p.split(',').map(Number);
      path.push(`${X(x).toFixed(1)},${(590 + y / 3).toFixed(1)}`);
    });
    vols.split(' ').forEach(token => {
      const [x, h] = token.slice(1).split(',').map(Number);
      volume += rect(Math.round(X(x) - .5), 954 - third(h), 1, third(h), COLORS[token[0]]);
    });
  });
  marks += `<polyline points="${path.join(' ')}" fill="none" stroke="#c4c0ff" stroke-width="1.2" shape-rendering="auto"/>`;
  marks += '<rect x="1177.500" y="752.500" width="19" height="11" fill="none" stroke="#a0c800" stroke-width="3"/><rect x="1300.500" y="756.500" width="22" height="15" fill="none" stroke="#ff3232" stroke-width="3"/>';
  const labels = `<span class="expiry" style="${place(P, 680, 852)}">3/20/20</span><span class="tip hi" style="${place(P, 4, 613)}">Hi: 0.11</span><span class="tip lo" style="${place(P, 420, 839)}">Lo: 0.0525</span>`;
  draw(P, marks, labels);
  draw('intra-volume', volume);
  axis('intra-price-axis', P, [['0.12', 607], ['0.11', 640], ['0.1', 673], ['0.09', 707], ['0.08', 740], ['0.0694', 774, true], ['0.06', 807], ['0.05', 840]]);
  axis('intra-volume-axis', 'intra-volume', [['100', 923], ['0', 955]]);
  dates('intra-dates', P, '10@23 11@56 12@89 14@122 Tue@173 11@211 12@244 Wed@288 11@328 13@361 Thu@427 11@465 13@498 Fri@555 10@588 12@620 14@653 Mon@692 11@731 13@764 Tue@805 10@841 12@874 13@907 Wed@957 11@996 12@1029 14@1062 Thu@1099 11@1137 12@1170 13@1202 Fri@1256 10@1289 13@1322 15@1355');
}
```
